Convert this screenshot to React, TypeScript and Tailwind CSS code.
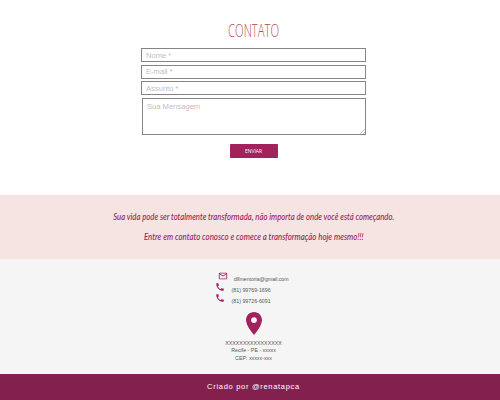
import React from 'react';

const fieldClass =
  'block border border-[#858585] bg-white font-["Liberation_Sans",Arial,sans-serif] text-[7.6px] text-[#2b2b2b] placeholder:text-[#c0c0c0] placeholder:opacity-100 outline-none rounded-none';

function PhoneIcon() {
  return (
    <svg viewBox="0 0 24 24" className="size-[10px] shrink-0 fill-[#a3215c]">
      <path d="M6.62 10.79c1.44 2.83 3.76 5.14 6.59 6.59l2.2-2.2c.27-.27.67-.36 1.02-.24 1.12.37 2.33.57 3.57.57.55 0 1 .45 1 1V20c0 .55-.45 1-1 1-9.39 0-17-7.61-17-17 0-.55.45-1 1-1h3.5c.55 0 1 .45 1 1 0 1.25.2 2.45.57 3.57.11.35.03.74-.25 1.02l-2.2 2.2z" />
    </svg>
  );
}

function MailIcon() {
  return (
    <svg viewBox="0 0 24 24" className="size-[10px] shrink-0 fill-[#a3215c]">
      <path d="M22 6c0-1.1-.9-2-2-2H4c-1.1 0-2 .9-2 2v12c0 1.1.9 2 2 2h16c1.1 0 2-.9 2-2V6zm-2 0-8 5-8-5h16zm0 12H4V8l8 5 8-5v10z" />
    </svg>
  );
}

function Contact() {
  return (
    <section className="flex h-[195px] flex-col items-center bg-white pt-[18px]">
      <h2 className="flex h-[25px] origin-center scale-x-[0.645] items-center whitespace-nowrap font-['Open_Sans',sans-serif] text-[17.5px] font-light leading-none text-[#b4504f]">
        CONTATO
      </h2>
      <form className="mt-[5px] flex flex-col items-center">
        <input className={`${fieldClass} h-[14px] w-[225px] px-1`} placeholder="Nome *" />
        <input className={`${fieldClass} mt-[2.5px] h-[14px] w-[225px] px-1`} placeholder="E-mail *" />
        <input className={`${fieldClass} mt-[2.5px] h-[14px] w-[225px] px-1`} placeholder="Assunto *" />
        <div className="relative mt-[3px]">
          <textarea
            className={`${fieldClass} h-[37px] w-[224px] resize-none overflow-hidden px-[4.5px] pt-[3px] leading-[9px]`}
            placeholder="Sua Mensagem"
          />
          <svg viewBox="0 0 5 5" className="absolute bottom-[1px] right-[1px] size-[5px] stroke-[#a0a0a0]">
            <path d="M0 5 5 0M3 5l2-2" fill="none" strokeWidth=".6" />
          </svg>
        </div>
        <button
          type="button"
          className="mt-[9px] flex h-[14px] w-[48px] items-center justify-center rounded-[1px] bg-[#a3215c] font-['Open_Sans',sans-serif] text-[5px] leading-none text-white"
        >
          ENVIAR
        </button>
      </form>
    </section>
  );
}

function Callout() {
  return (
    <section className="flex h-[64px] flex-col items-center bg-[#f5e4e1] pt-[11px] font-['Lato',sans-serif] text-[8.8px] font-medium italic leading-[21px] text-[#9a2159]">
      <p className="scale-x-[0.88] whitespace-nowrap">
        Sua vida pode ser totalmente transformada, não importa de onde você está começando.
      </p>
      <p className="-mt-px scale-x-[0.895] whitespace-nowrap">
        Entre em contato conosco e comece a transformação hoje mesmo!!!
      </p>
    </section>
  );
}

function Details() {
  return (
    <section className="flex h-[115px] flex-col items-center bg-[#f5f5f5] font-['Liberation_Sans',Arial,sans-serif] text-[5.3px] text-[#555555]">
      <div className="mr-[7px] mt-[12px] flex w-[74px] flex-col">
        <div className="flex h-[11px]">
          <span className="ml-[4.5px] flex"><MailIcon /></span>
          <span className="ml-[6.5px] mt-[5px] whitespace-nowrap text-[5.2px] leading-[7px]">dlfmentoria@gmail.com</span>
        </div>
        <div className="flex h-[11px]">
          <span className="ml-[2px] flex"><PhoneIcon /></span>
          <span className="ml-[6.5px] mt-[5px] whitespace-nowrap leading-[7px]">(81) 99769-1696</span>
        </div>
        <div className="flex h-[11px]">
          <span className="ml-[2px] flex"><PhoneIcon /></span>
          <span className="ml-[6.5px] mt-[5px] whitespace-nowrap leading-[7px]">(81) 99726-6091</span>
        </div>
      </div>
      <svg viewBox="0 0 16 23" className="mt-[8px] h-[23px] w-[16px] shrink-0 fill-[#a3215c]">
        <path
          fillRule="evenodd"
          d="M8 0C3.6 0 0 3.6 0 8c0 6 8 15 8 15s8-9 8-15c0-4.4-3.6-8-8-8zm0 5.2a2.9 2.9 0 1 1 0 5.8 2.9 2.9 0 0 1 0-5.8z"
        />
      </svg>
      <div className="mt-[4.5px] flex flex-col items-center leading-[7.6px]">
        <span>XXXXXXXXXXXXXXXX</span>
        <span>Recife - PE - xxxxx</span>
        <span>CEP: xxxxx-xxx</span>
      </div>
    </section>
  );
}

export default function App() {
  return (
    <main className="flex h-[400px] w-[500px] flex-col overflow-hidden bg-white [&_input]:appearance-none">
      <div className="w-[507px]">
        <Contact />
      </div>
      <div className="w-[507px]">
        <Callout />
      </div>
      <div className="w-[507px]">
        <Details />
      </div>
      <footer className="flex h-[26px] w-[507px] items-center justify-center bg-[#84204e] font-['Liberation_Sans',Arial,sans-serif] text-[7.5px] tracking-[0.7px] text-white">
        Criado por @renatapca
      </footer>
    </main>
  );
}
